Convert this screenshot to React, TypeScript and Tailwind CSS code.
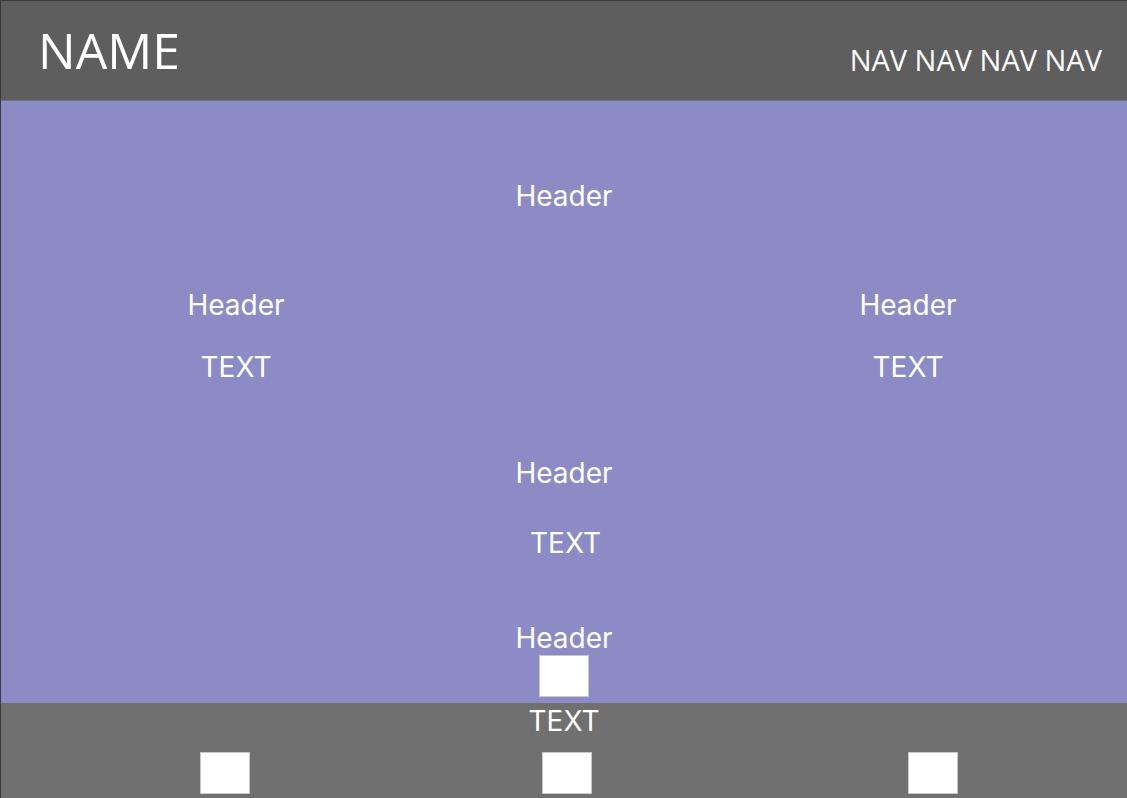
import React from "react";

const Box = () => <div className="w-[50px] h-[42px] bg-white border border-[#c8c8c8]" />;

export default function App() {
  return (
    <div className="w-[1127px] h-[798px] overflow-hidden border-l border-t border-[#3a3a3a] flex flex-col text-white" style={{ fontFamily: "Inter, sans-serif" }}>
      <header className="h-[100px] shrink-0 bg-[#5e5e5e] flex items-center justify-between pl-[37px] pr-[25px] border-b border-[#6e6e88]">
        <div className="text-[50px] leading-none mt-[-2px]" style={{ fontFamily: "'Open Sans', sans-serif" }}>NAME</div>
        <nav className="text-[29px] leading-none mt-[18px] flex gap-[7.5px]" style={{ fontFamily: "'Open Sans', sans-serif" }}>
          <span>NAV</span><span>NAV</span><span>NAV</span><span>NAV</span>
        </nav>
      </header>
      <main className="h-[602px] shrink-0 bg-[#8c8bc5] flex flex-col items-center text-[28px] leading-none">
        <div className="mt-[81px]">Header</div>
        <div className="w-full flex mt-[81px]">
          <div className="w-[470px] flex flex-col items-center gap-[34px]">
            <div>Header</div>
            <div>TEXT</div>
          </div>
          <div className="flex-1" />
          <div className="w-[438px] flex flex-col items-center gap-[34px]">
            <div>Header</div>
            <div>TEXT</div>
          </div>
        </div>
        <div className="mt-[78px]">Header</div>
        <div className="mt-[42px] ml-[3px]">TEXT</div>
        <div className="mt-[67px]">Header</div>
        <div className="mt-[3px]"><Box /></div>
      </main>
      <footer className="flex-1 bg-[#707070] flex flex-col text-[28px] leading-none">
        <div className="text-center mt-[4px]">TEXT</div>
        <div className="flex mt-[17px]">
          <div className="ml-[199px]"><Box /></div>
          <div className="ml-[292px]"><Box /></div>
          <div className="ml-[316px]"><Box /></div>
        </div>
      </footer>
    </div>
  );
}
